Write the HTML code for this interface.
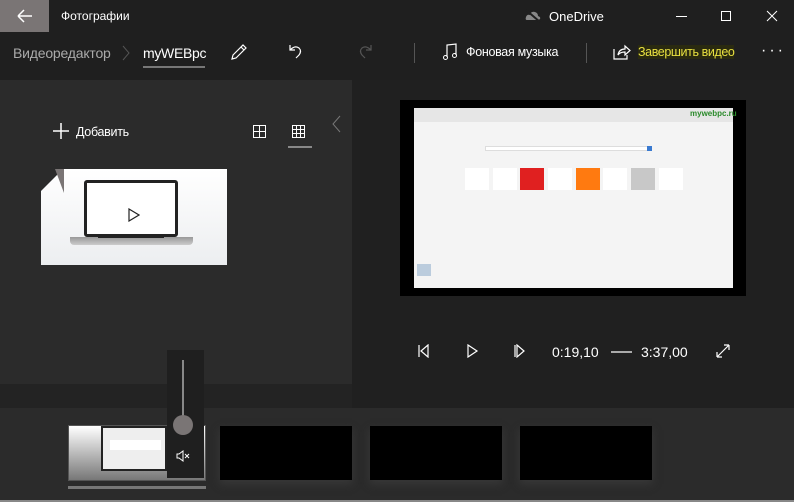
<!DOCTYPE html><html><head><meta charset="utf-8"><style>
*{margin:0;padding:0;box-sizing:border-box}
body{width:794px;height:502px;overflow:hidden;background:#202020;font-family:"Liberation Sans",sans-serif;color:#fff;position:relative}
.a{position:absolute}
.t{font-size:12.5px;white-space:nowrap}
</style></head><body>
<div class="a" style="left:0;top:0;width:794px;height:80px;background:#1f1f1f"></div>
<div class="a" style="left:0;top:0;width:49px;height:32px;background:#7a7575"></div>
<svg class="a" style="left:17px;top:9px" width="16" height="14"><path d="M1 7H15M1 7L7 1M1 7L7 13" stroke="#fff" stroke-width="1.5" fill="none"/></svg>
<div class="a t" style="left:61px;top:9px;font-size:12px">Фотографии</div>
<svg class="a" style="left:525px;top:9px" width="16" height="14"><path d="M2 11Q0 11 1 8Q2 5 5 6Q6 2 10 3Q13 4 13 7Q16 8 15 10Q14 11 13 11Z" fill="#888"/><path d="M1 1L15 13" stroke="#1f1f1f" stroke-width="2"/></svg>
<div class="a t" style="left:549px;top:9px;font-size:13px">OneDrive</div>
<div class="a" style="left:676px;top:16px;width:11px;height:1px;background:#fff"></div>
<div class="a" style="left:721px;top:11px;width:10px;height:10px;border:1px solid #fff"></div>
<svg class="a" style="left:766px;top:10px" width="12" height="12"><path d="M1 1L11 11M11 1L1 11" stroke="#fff"/></svg>
<div class="a t" style="left:13px;top:45px;font-size:14px;color:#aaa;letter-spacing:-0.2px">Видеоредактор</div>
<svg class="a" style="left:121px;top:44px" width="10" height="18"><path d="M2 2L8 9L2 16" stroke="#555" fill="none"/></svg>
<div class="a t" style="left:143px;top:45px;font-size:14px;letter-spacing:-0.3px">myWEBpc</div>
<div class="a" style="left:143px;top:66px;width:62px;height:2px;background:#777"></div>
<svg class="a" style="left:230px;top:43px" width="18" height="18"><path d="M2 16L3 12L13 2L16 5L6 15Z M11 4L14 7" stroke="#fff" fill="none" stroke-width="1.2"/></svg>
<svg class="a" style="left:287px;top:42px" width="18" height="18"><path d="M3 3V8H8M3 8Q8 3 12 6Q15 9 12 13L9 16" stroke="#fff" fill="none" stroke-width="1.2"/></svg>
<svg class="a" style="left:356px;top:42px" width="18" height="18"><path d="M15 3V8H10M15 8Q10 3 6 6Q3 9 6 13L9 16" stroke="#555" fill="none" stroke-width="1.2"/></svg>
<div class="a" style="left:414px;top:43px;width:1px;height:20px;background:#555"></div>
<svg class="a" style="left:442px;top:43px" width="16" height="18"><path d="M5 14V2L14 1V12" stroke="#fff" fill="none" stroke-width="1.2"/><circle cx="3.5" cy="14.5" r="2" stroke="#fff" fill="none"/><circle cx="12.5" cy="12.5" r="2" stroke="#fff" fill="none"/></svg>
<div class="a t" style="left:466px;top:45px;letter-spacing:-0.3px">Фоновая музыка</div>
<div class="a" style="left:586px;top:43px;width:1px;height:20px;background:#555"></div>
<svg class="a" style="left:613px;top:43px" width="18" height="17"><path d="M1 6V16H14V12M5 12Q6 6 12 6V3L17 7.5L12 12V9Q7 9 5 12Z" stroke="#fff" fill="none" stroke-width="1.2"/></svg>
<div class="a t" style="left:638px;top:45px;color:#e8e040;background:#2a2a10;letter-spacing:-0.4px">Завершить видео</div>
<div class="a t" style="left:761px;top:42px;font-size:16px;letter-spacing:3px">···</div>
<div class="a" style="left:0;top:80px;width:352px;height:304px;background:#2b2b2b"></div>
<div class="a" style="left:0;top:384px;width:352px;height:24px;background:#232323"></div>
<div class="a" style="left:0;top:408px;width:794px;height:92px;background:#2b2b2b"></div>
<div class="a" style="left:0;top:500px;width:794px;height:2px;background:#888"></div>
<svg class="a" style="left:53px;top:123px" width="16" height="16"><path d="M8 0V16M0 8H16" stroke="#fff" stroke-width="1.5"/></svg>
<div class="a t" style="left:76px;top:125px;letter-spacing:-0.3px">Добавить</div>
<svg class="a" style="left:253px;top:125px" width="13" height="13"><path d="M.5 .5H12.5V12.5H.5ZM6.5 0V13M0 6.5H13" stroke="#fff" fill="none"/></svg>
<svg class="a" style="left:292px;top:125px" width="13" height="13"><path d="M.5 .5H12.5V12.5H.5ZM4.5 0V13M8.5 0V13M0 4.5H13M0 8.5H13" stroke="#fff" fill="none"/></svg>
<div class="a" style="left:288px;top:146px;width:24px;height:2px;background:#888"></div>
<svg class="a" style="left:331px;top:115px" width="10" height="18"><path d="M9 1L2 9L9 17" stroke="#777" fill="none"/></svg>
<div class="a" style="left:41px;top:169px;width:186px;height:96px;background:linear-gradient(#fff,#eceef0)"></div>
<div class="a" style="left:41px;top:169px;width:0;height:0;border-top:22px solid #2b2b2b;border-right:22px solid transparent"></div>
<div class="a" style="left:55px;top:169px;width:9px;height:24px;background:#7a7575;clip-path:polygon(0 0,100% 0,100% 100%)"></div>
<div class="a" style="left:84px;top:180px;width:94px;height:57px;background:#fff;border:3px solid #222;border-radius:3px"></div>
<div class="a" style="left:70px;top:237px;width:123px;height:8px;background:linear-gradient(#999,#ccc);border-radius:0 0 4px 4px"></div>
<div class="a" style="left:98px;top:234px;width:66px;height:4px;background:#222"></div>
<svg class="a" style="left:128px;top:208px" width="12" height="14"><path d="M1 1L11 7L1 13Z" stroke="#222" fill="none" stroke-width="1.2"/></svg>
<div class="a" style="left:400px;top:100px;width:346px;height:196px;background:#000"></div>
<div class="a" style="left:414px;top:108px;width:319px;height:180px;background:#f4f4f4"></div>
<div class="a" style="left:414px;top:108px;width:319px;height:14px;background:#e6e6e6"></div>
<div class="a t" style="left:690px;top:109px;font-size:8px;color:#2a8a2a;font-weight:bold">mywebpc.ru</div>
<div class="a" style="left:485px;top:146px;width:167px;height:5px;background:#fff;border:1px solid #ddd"></div>
<div class="a" style="left:647px;top:146px;width:5px;height:5px;background:#3a7ad0"></div>
<div class="a" style="left:465px;top:168px;width:24px;height:22px;background:#fff"></div>
<div class="a" style="left:493px;top:168px;width:24px;height:22px;background:#fff"></div>
<div class="a" style="left:520px;top:168px;width:24px;height:22px;background:#e02020"></div>
<div class="a" style="left:548px;top:168px;width:24px;height:22px;background:#fff"></div>
<div class="a" style="left:576px;top:168px;width:24px;height:22px;background:#ff7a10"></div>
<div class="a" style="left:603px;top:168px;width:24px;height:22px;background:#fff"></div>
<div class="a" style="left:631px;top:168px;width:24px;height:22px;background:#c8c8c8"></div>
<div class="a" style="left:659px;top:168px;width:24px;height:22px;background:#fff"></div>
<div class="a" style="left:417px;top:264px;width:14px;height:12px;background:#bcd"></div>
<svg class="a" style="left:418px;top:344px" width="12" height="14"><path d="M10 1L3 7L10 13ZM1 1V13" stroke="#fff" fill="none" stroke-width="1.2"/></svg>
<svg class="a" style="left:467px;top:344px" width="12" height="14"><path d="M1 1L10 7L1 13Z" stroke="#fff" fill="none" stroke-width="1.2"/></svg>
<svg class="a" style="left:514px;top:344px" width="12" height="14"><path d="M3 1L10 7L3 13ZM1 1V13" stroke="#fff" fill="none" stroke-width="1.2"/></svg>
<div class="a t" style="left:552px;top:344px;font-size:14px">0:19,10</div>
<div class="a" style="left:611px;top:351px;width:21px;height:2px;background:#aaa"></div>
<div class="a t" style="left:641px;top:344px;font-size:14px">3:37,00</div>
<svg class="a" style="left:716px;top:344px" width="14" height="14"><path d="M1 13L13 1M1 13V8M1 13H6M13 1H8M13 1V6" stroke="#fff" fill="none" stroke-width="1.2"/></svg>
<div class="a" style="left:68px;top:425px;width:138px;height:56px;background:linear-gradient(#fff,#777);border:1px solid #555"></div>
<div class="a" style="left:101px;top:426px;width:66px;height:45px;background:#eee;border:2px solid #222"></div>
<div class="a" style="left:110px;top:440px;width:51px;height:10px;background:#fff"></div>
<div class="a" style="left:68px;top:486px;width:138px;height:3px;background:#777"></div>
<div class="a" style="left:220px;top:426px;width:132px;height:54px;background:#000;box-shadow:0 4px 8px #383838"></div>
<div class="a" style="left:370px;top:426px;width:132px;height:54px;background:#000;box-shadow:0 4px 8px #383838"></div>
<div class="a" style="left:520px;top:426px;width:132px;height:54px;background:#000;box-shadow:0 4px 8px #383838"></div>
<div class="a" style="left:167px;top:350px;width:37px;height:128px;background:#1f1f1f"></div>
<div class="a" style="left:182px;top:360px;width:2px;height:62px;background:#888"></div>
<div class="a" style="left:173px;top:415px;width:20px;height:20px;border-radius:50%;background:#7a7575"></div>
<svg class="a" style="left:176px;top:450px" width="14" height="12"><path d="M1 4H3L7 1V11L3 8H1Z" stroke="#fff" fill="none"/><path d="M9 4L13 8M13 4L9 8" stroke="#fff"/></svg>
</body></html>
